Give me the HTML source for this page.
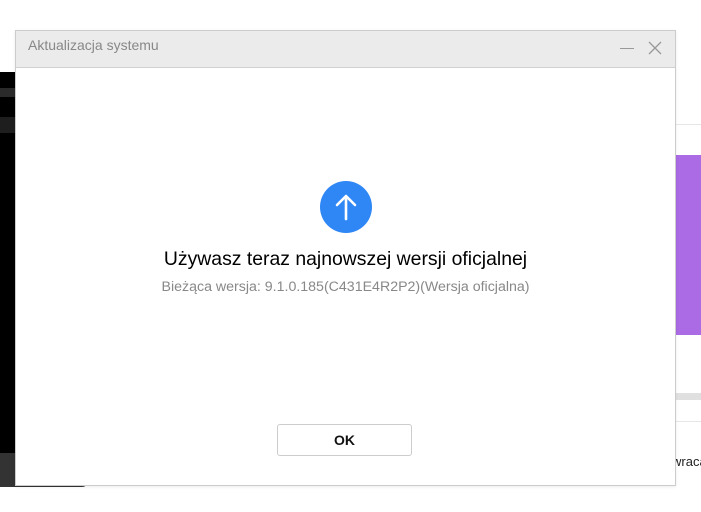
<!DOCTYPE html>
<html><head><meta charset="utf-8"><style>
*{margin:0;padding:0;box-sizing:border-box}
body{width:701px;height:512px;background:#fff;position:relative;overflow:hidden;font-family:"Liberation Sans",Arial,sans-serif}
.a{position:absolute}
</style></head><body>
<div class="a" style="left:0;top:72px;width:16px;height:382px;background:#000"></div>
<div class="a" style="left:0;top:88px;width:16px;height:9px;background:#2a2a2a"></div>
<div class="a" style="left:0;top:117px;width:16px;height:16px;background:#1e1e1e"></div>
<div class="a" style="left:0;top:453px;width:88px;height:34px;background:#333;border-bottom-right-radius:6px"></div>
<div class="a" style="left:675px;top:124px;width:26px;height:1px;background:#e6e6e6"></div>
<div class="a" style="left:675px;top:155px;width:26px;height:180px;background:#ab6be4"></div>
<div class="a" style="left:675px;top:393px;width:26px;height:7px;background:#e0e0e0"></div>
<div class="a" style="left:675px;top:421px;width:26px;height:1px;background:#e6e6e6"></div>
<div class="a" style="left:672px;top:454px;font-size:13px;color:#222">wraca</div>

<div class="a" style="left:15px;top:30px;width:661px;height:456px;background:#fff;border:1px solid #ccc;box-shadow:0 1px 3px rgba(0,0,0,.08)">
  <div style="height:37px;background:#ebebeb;border-bottom:1px solid #d0d0d0;position:relative">
    <div class="a" style="left:12px;top:6px;font-size:14px;color:#888">Aktualizacja systemu</div>
    <div class="a" style="left:604px;top:17px;width:14px;height:1px;background:#999"></div>
    <svg class="a" style="left:632px;top:10px" width="14" height="14"><path d="M1 1L13 13M13 1L1 13" stroke="#999" stroke-width="1.3"/></svg>
  </div>
  <svg class="a" style="left:303px;top:150px" width="54" height="54"><circle cx="27" cy="26" r="26" fill="#2f87f5"/><path d="M27 38V15M18 24L27 15L36 24" stroke="#fff" stroke-width="2.6" fill="none" stroke-linecap="round" stroke-linejoin="round"/></svg>
  <div class="a" style="left:0;width:659px;top:217px;text-align:center;font-size:19.4px;color:#000">Używasz teraz najnowszej wersji oficjalnej</div>
  <div class="a" style="left:0;width:659px;top:248px;text-align:center;font-size:14.2px;color:#888">Bieżąca wersja: 9.1.0.185(C431E4R2P2)(Wersja oficjalna)</div>
  <div class="a" style="left:261px;top:393px;width:135px;height:32px;border:1px solid #ccc;border-radius:3px;text-align:center;line-height:30px;font-size:14px;font-weight:bold;color:#111">OK</div>
</div>
</body></html>
